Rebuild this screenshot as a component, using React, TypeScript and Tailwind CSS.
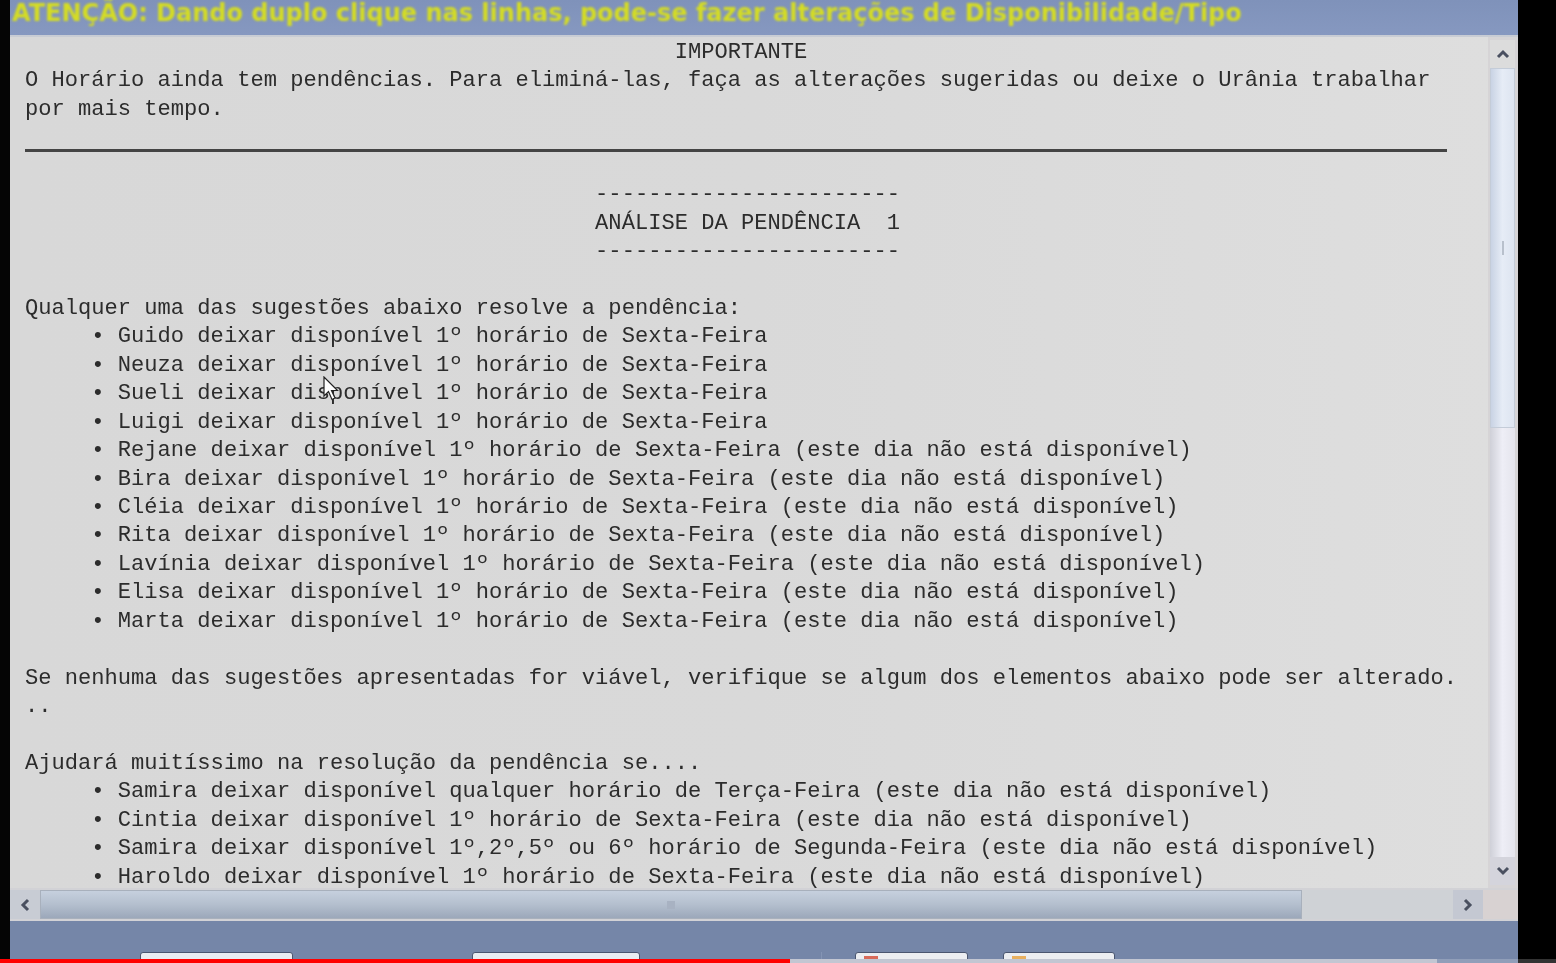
import React from "react";

type Line = string | { hr: true };

const sug1 = [
  "Guido deixar disponível 1º horário de Sexta-Feira",
  "Neuza deixar disponível 1º horário de Sexta-Feira",
  "Sueli deixar disponível 1º horário de Sexta-Feira",
  "Luigi deixar disponível 1º horário de Sexta-Feira",
  "Rejane deixar disponível 1º horário de Sexta-Feira (este dia não está disponível)",
  "Bira deixar disponível 1º horário de Sexta-Feira (este dia não está disponível)",
  "Cléia deixar disponível 1º horário de Sexta-Feira (este dia não está disponível)",
  "Rita deixar disponível 1º horário de Sexta-Feira (este dia não está disponível)",
  "Lavínia deixar disponível 1º horário de Sexta-Feira (este dia não está disponível)",
  "Elisa deixar disponível 1º horário de Sexta-Feira (este dia não está disponível)",
  "Marta deixar disponível 1º horário de Sexta-Feira (este dia não está disponível)",
];

const sug2 = [
  "Samira deixar disponível qualquer horário de Terça-Feira (este dia não está disponível)",
  "Cintia deixar disponível 1º horário de Sexta-Feira (este dia não está disponível)",
  "Samira deixar disponível 1º,2º,5º ou 6º horário de Segunda-Feira (este dia não está disponível)",
  "Haroldo deixar disponível 1º horário de Sexta-Feira (este dia não está disponível)",
];

const pad = (n: number) => " ".repeat(n);
const dashes = "-".repeat(23);

const lines: Line[] = [
  pad(49) + "IMPORTANTE",
  "O Horário ainda tem pendências. Para eliminá-las, faça as alterações sugeridas ou deixe o Urânia trabalhar",
  "por mais tempo.",
  { hr: true },
  pad(43) + dashes,
  pad(43) + "ANÁLISE DA PENDÊNCIA  1",
  pad(43) + dashes,
  "",
  "Qualquer uma das sugestões abaixo resolve a pendência:",
  ...sug1.map((s) => pad(5) + "• " + s),
  "",
  "Se nenhuma das sugestões apresentadas for viável, verifique se algum dos elementos abaixo pode ser alterado.",
  "..",
  "",
  "Ajudará muitíssimo na resolução da pendência se....",
  ...sug2.map((s) => pad(5) + "• " + s),
];

function Chevron({ dir }: { dir: "up" | "down" | "left" | "right" }) {
  const rot = { up: 0, right: 90, down: 180, left: 270 }[dir];
  return (
    <svg width="14" height="14" viewBox="0 0 14 14" style={{ transform: `rotate(${rot}deg)` }}>
      <path d="M2 10 L7 5 L12 10" fill="none" stroke="#4a5060" strokeWidth="3" />
    </svg>
  );
}

// mouse pointer sitting over the list
function Cursor() {
  return (
    <svg
      className="pointer-events-none absolute left-[313px] top-[339px] blur-[0.6px]"
      width="18"
      height="26"
      viewBox="0 0 18 26"
    >
      <path d="M1 1 L1 20 L5.5 15.5 L9 23.5 L12 22 L8.5 14.5 L14.5 14.5 Z" fill="#fff" stroke="#222" strokeWidth="1.2" />
    </svg>
  );
}

export default function App() {
  return (
    <div className="relative flex h-[963px] w-[1556px] overflow-hidden bg-black">
      <div className="w-[10px] shrink-0 bg-[#050505]" />

      <div className="flex w-[1508px] shrink-0 flex-col">
        {/* warning bar */}
        <div className="h-[35px] shrink-0 overflow-hidden bg-gradient-to-b from-[#7f92ba] to-[#8698c0] pl-[2px]">
          <p className="mt-[-2px] whitespace-nowrap font-['DejaVu_Sans',sans-serif] text-[24px] font-bold leading-[30px] text-[#d4dc24] blur-[0.9px]">
            ATENÇÃO: Dando duplo clique nas linhas, pode-se fazer alterações de Disponibilidade/Tipo
          </p>
        </div>
        <div className="h-[2px] shrink-0 bg-[#c8ccd4]" />

        {/* report + vertical scrollbar */}
        <div className="flex h-[851px] shrink-0">
          <div className="relative flex-1 overflow-hidden bg-gradient-to-r from-[#d8d8d8] via-[#d9d9d9] to-[#dedede] pl-[15px] pt-[2px]">
            <div className="font-['Courier_New','Nimbus_Mono_PS','FreeMono','Liberation_Mono',monospace] text-[22.1px] leading-[28.45px] text-[#2c2c2c] blur-[0.6px]">
              {lines.map((l, i) =>
                typeof l === "string" ? (
                  <div key={i} className="h-[28.45px] whitespace-pre">
                    {l}
                  </div>
                ) : (
                  <div key={i} className="h-[56.9px] pt-[25px]">
                    <div className="h-[3px] w-[1422px] bg-[#444]" />
                  </div>
                )
              )}
            </div>
            <Cursor />
          </div>

          <div className="flex w-[30px] shrink-0 flex-col bg-[#d6d4d6] py-[3px] pl-[2px] pr-[3px]">
            <div className="flex h-[28px] items-center justify-center bg-[#dcdcdc]">
              <Chevron dir="up" />
            </div>
            <div className="flex h-[360px] items-center justify-center border border-[#c4ccd8] bg-gradient-to-r from-[#c9d3e4] via-[#e6ecf6] to-[#dde4f0]">
              <div className="h-[14px] w-[2px] bg-[#b8c0cc]" />
            </div>
            <div className="flex-1 bg-gradient-to-r from-[#cfd0d8] via-[#eeeef6] to-[#e4e4ec]" />
            <div className="flex h-[28px] items-center justify-center bg-[#d4d4dc]">
              <Chevron dir="down" />
            </div>
          </div>
        </div>

        {/* horizontal scrollbar */}
        <div className="flex h-[33px] shrink-0 items-stretch bg-[#d2d2d6] py-[2px]">
          <div className="flex w-[30px] items-center justify-center bg-[#c8ccd4]">
            <Chevron dir="left" />
          </div>
          <div className="flex w-[1262px] items-center justify-center border border-[#a8b0bc] bg-gradient-to-b from-[#c6d0de] via-[#b4bfce] to-[#9ca8ba]">
            <div className="h-[8px] w-[8px] bg-[#a8b2c2]" />
          </div>
          <div className="w-[151px] bg-[#cfd2d6]" />
          <div className="flex w-[30px] items-center justify-center bg-[#c4c8d2]">
            <Chevron dir="right" />
          </div>
          <div className="flex-1 bg-[#d8d2d2]" />
        </div>

        {/* bottom panel with buttons */}
        <div className="flex flex-1 bg-[#7586a8] pt-[31px]">
          <div className="flex w-[812px] gap-[179px] border-r border-[#8494b4] pl-[130px]">
            <div className="h-[20px] w-[153px] rounded-[3px] border border-[#4a5670] bg-[#e8ecf2]" />
            <div className="h-[20px] w-[168px] rounded-[3px] border border-[#4a5670] bg-[#e8ecf2]" />
          </div>
          <div className="flex gap-[35px] pl-[33px]">
            <div className="h-[20px] w-[113px] rounded-[3px] border border-[#4a5670] bg-[#eceef2] pl-[8px] pt-[3px]">
              <div className="h-[6px] w-[14px] bg-[#d86a5a]" />
            </div>
            <div className="h-[20px] w-[112px] rounded-[3px] border border-[#4a5670] bg-[#eceef2] pl-[8px] pt-[3px]">
              <div className="h-[6px] w-[14px] bg-[#e8b060]" />
            </div>
          </div>
        </div>
      </div>

      <div className="flex-1 bg-black" />

      {/* video progress bar overlay */}
      <div className="absolute inset-x-0 bottom-0 flex h-[4px] bg-white/20">
        <div className="w-[790px] bg-[#ff0000]" />
        <div className="w-[647px] bg-[#c2c6d2]" />
      </div>
    </div>
  );
}
